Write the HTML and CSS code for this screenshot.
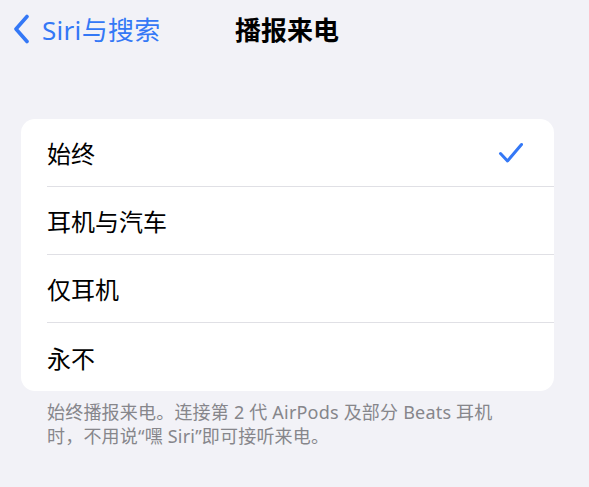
FILE: index.html
```html
<!DOCTYPE html>
<html lang="zh-CN">
<head>
<meta charset="utf-8">
<link rel="stylesheet" href="styles.css">
</head>
<body>
<div class="page">
  <header class="nav">
    <div class="back">
      <svg class="chev" width="18" height="30" viewBox="0 0 18 30"><path d="M15 2.5 L4 15 L15 27.5" fill="none" stroke="#3478f6" stroke-width="3.6" stroke-linecap="round" stroke-linejoin="round"/></svg>
      <span class="back-label">Siri与搜索</span>
    </div>
    <div class="title">播报来电</div>
  </header>
  <section class="card">
    <div class="row"><span class="label">始终</span>
      <svg class="check" width="26" height="22" viewBox="0 0 26 22"><path d="M2.5 11.5 L9.5 19 L23.5 2.5" fill="none" stroke="#3478f6" stroke-width="3" stroke-linecap="round" stroke-linejoin="round"/></svg>
    </div>
    <div class="row"><span class="label">耳机与汽车</span></div>
    <div class="row"><span class="label">仅耳机</span></div>
    <div class="row"><span class="label">永不</span></div>
  </section>
  <p class="footer">始终播报来电。连接第 2 代 AirPods 及部分 Beats 耳机<br>时，不用说“嘿 Siri”即可接听来电。</p>
</div>
</body>
</html>
```
FILE: styles.css
```css
html, body {
  margin: 0;
  padding: 0;
  background: #f2f2f7;
}
body {
  font-family: "Noto Sans", "Noto Sans CJK SC", sans-serif;
  width: 589px;
  height: 487px;
  overflow: hidden;
}
.page {
  padding: 0 35px 0 21px;
}
.nav {
  height: 58px;
  display: flex;
  align-items: center;
  position: relative;
  margin-left: -9px;
}
.back {
  display: flex;
  align-items: center;
  gap: 12px;
  color: #3478f6;
}
.back-label {
  font-size: 26px;
  letter-spacing: 0.3px;
}
.title {
  position: absolute;
  left: 223px;
  font-size: 26px;
  font-weight: 700;
  color: #000;
}
.card {
  margin-top: 61px;
  background: #fff;
  border-radius: 14px;
  overflow: hidden;
}
.row {
  height: 68px;
  margin-left: 26px;
  padding-right: 30px;
  display: flex;
  align-items: center;
  justify-content: space-between;
  border-bottom: 1px solid #e0e0e5;
  box-sizing: border-box;
}
.row:last-child {
  border-bottom: none;
}
.label {
  font-size: 24px;
  color: #000;
}
.footer {
  margin: 9px 0 0 26px;
  font-size: 18px;
  line-height: 24px;
  letter-spacing: 0.2px;
  color: #86868b;
}
```
